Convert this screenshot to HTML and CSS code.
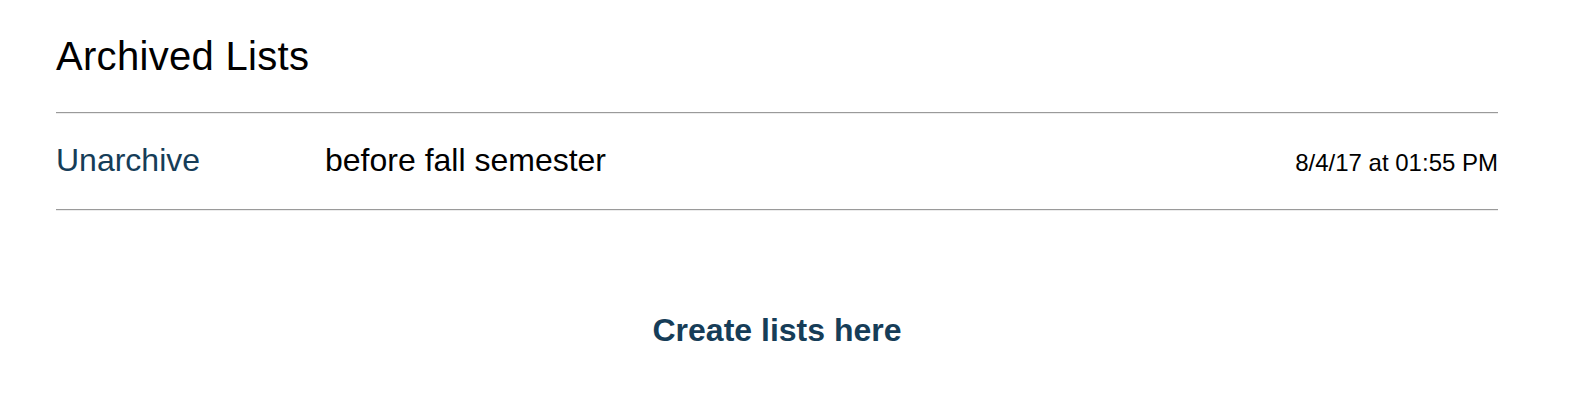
FILE: index.html
```html
<!DOCTYPE html>
<html>
<head>
<meta charset="utf-8">
<link rel="stylesheet" href="styles.css">
</head>
<body>
<div class="page">
  <h1 class="title">Archived Lists</h1>
  <div class="rule"></div>
  <div class="row">
    <a class="unarchive" href="#">Unarchive</a>
    <span class="name">before fall semester</span>
    <span class="date">8/4/17 at 01:55 PM</span>
  </div>
  <div class="rule"></div>
  <div class="create-wrap">
    <a class="create" href="#">Create lists here</a>
  </div>
</div>
</body>
</html>
```
FILE: styles.css
```css
html, body {
  margin: 0;
  padding: 0;
  background: #ffffff;
}
body {
  font-family: "Liberation Sans", Arial, sans-serif;
  color: #000;
}
.page {
  padding: 0 74px 0 56px;
}
.title {
  margin: 32px 0 32px 0;
  font-size: 40px;
  line-height: 48px;
  font-weight: 300;
  letter-spacing: 0.3px;
}
.rule {
  height: 0;
  border-top: 1px solid #9a9a9a;
  border-bottom: 1px solid #ececec;
}
.row {
  display: flex;
  align-items: baseline;
  padding: 26px 0 26px 0;
  font-size: 32px;
  line-height: 40px;
}
.unarchive {
  width: 269px;
  color: #163d58;
  text-decoration: none;
}
.name {
  color: #000;
}
.date {
  margin-left: auto;
  font-size: 24px;
}
.create-wrap {
  display: flex;
  justify-content: center;
  margin-top: 99px;
}
.create {
  font-size: 32px;
  line-height: 40px;
  font-weight: bold;
  color: #163d58;
  text-decoration: none;
}
```
